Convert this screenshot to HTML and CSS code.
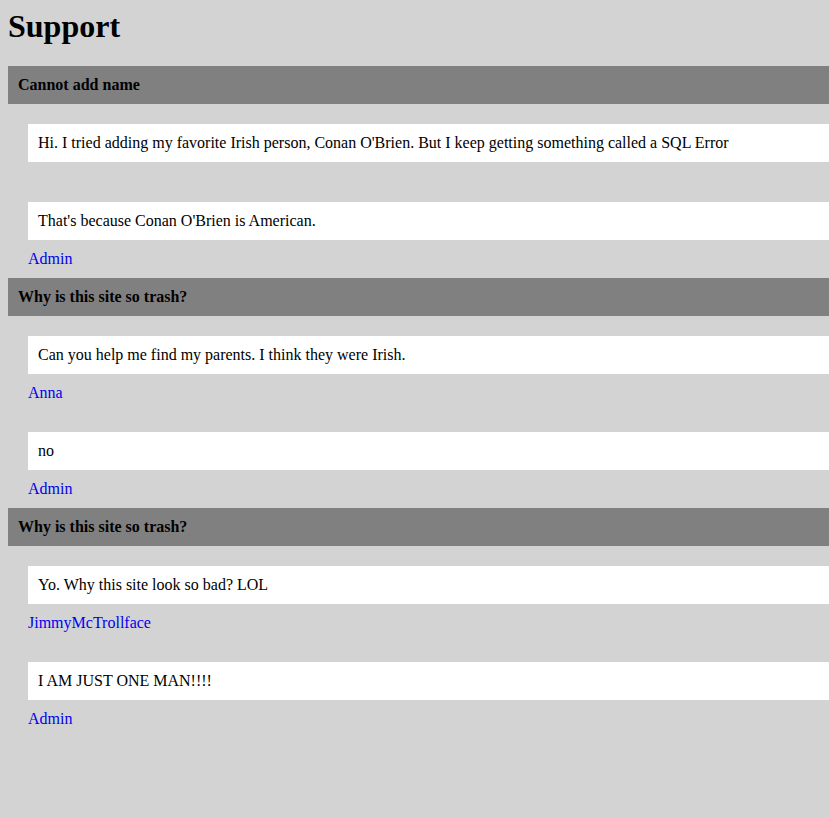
FILE: index.html
```html
<!DOCTYPE html>
<html>
<head>
<meta charset="utf-8">
<title>Support</title>
<link rel="stylesheet" href="styles.css">
</head>
<body>
<h1 class="title">Support</h1>

<section class="thread">
  <div class="thread-title">Cannot add name</div>
  <div class="post">
    <div class="message">Hi. I tried adding my favorite Irish person, Conan O'Brien. But I keep getting something called a SQL Error</div>
    <div class="author"></div>
  </div>
  <div class="post">
    <div class="message">That's because Conan O'Brien is American.</div>
    <div class="author"><a href="#">Admin</a></div>
  </div>
</section>

<section class="thread">
  <div class="thread-title">Why is this site so trash?</div>
  <div class="post">
    <div class="message">Can you help me find my parents. I think they were Irish.</div>
    <div class="author"><a href="#">Anna</a></div>
  </div>
  <div class="post">
    <div class="message">no</div>
    <div class="author"><a href="#">Admin</a></div>
  </div>
</section>

<section class="thread">
  <div class="thread-title">Why is this site so trash?</div>
  <div class="post">
    <div class="message">Yo. Why this site look so bad? LOL</div>
    <div class="author"><a href="#">JimmyMcTrollface</a></div>
  </div>
  <div class="post">
    <div class="message">I AM JUST ONE MAN!!!!</div>
    <div class="author"><a href="#">Admin</a></div>
  </div>
</section>
</body>
</html>
```

FILE: styles.css
```css
html {
  overflow-x: hidden;
  background: #d3d3d3;
}
body {
  margin: 8px 0 8px 8px;
  background: #d3d3d3;
  font-family: "Liberation Serif", "Times New Roman", serif;
  font-size: 16px;
  line-height: normal;
  color: #000;
}
.title {
  margin: 0 0 21px 0;
  font-size: 32px;
  font-weight: bold;
  line-height: 37px;
}
.thread-title {
  background: #808080;
  padding: 10px;
  font-weight: bold;
  line-height: 18px;
}
.post {
  margin-left: 20px;
}
.message {
  margin-top: 20px;
  background: #fff;
  padding: 10px;
  line-height: 18px;
}
.author {
  padding: 10px 0;
  line-height: 18px;
}
.author a {
  color: #0000ee;
  text-decoration: none;
}
```
